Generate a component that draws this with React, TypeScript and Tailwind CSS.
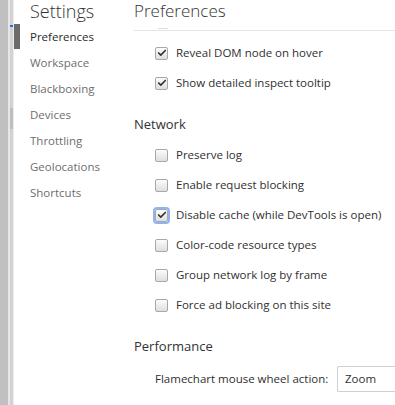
import { Check } from "lucide-react";

const navItems = ["Preferences", "Workspace", "Blackboxing", "Devices", "Throttling", "Geolocations", "Shortcuts"];

const network = [
  { label: "Preserve log", checked: false },
  { label: "Enable request blocking", checked: false },
  { label: "Disable cache (while DevTools is open)", checked: true, focused: true },
  { label: "Color-code resource types", checked: false },
  { label: "Group network log by frame", checked: false },
  { label: "Force ad blocking on this site", checked: false },
];

function Box({ checked, focused }: { checked: boolean; focused?: boolean }) {
  return (
    <span
      className={
        "flex size-[13px] shrink-0 items-center justify-center rounded-[2px] border border-[#a8a8a8] bg-gradient-to-b from-[#fcfcfc] to-[#dedede] " +
        (focused ? "outline outline-2 outline-[#8fb4f0]" : "")
      }
    >
      {checked && <Check size={10} strokeWidth={4} className="text-[#333]" />}
    </span>
  );
}

function Row({ label, checked, focused }: { label: string; checked: boolean; focused?: boolean }) {
  return (
    <div className="flex h-[30px] items-center gap-[8px] pl-[21px]">
      <Box checked={checked} focused={focused} />
      <span className="whitespace-nowrap text-[11.5px] text-[#303030]">{label}</span>
    </div>
  );
}

export default function App() {
  return (
    <div
      className="flex h-[405px] w-[395px] overflow-hidden bg-white"
      style={{ fontFamily: '"Segoe UI", "Open Sans", sans-serif' }}
    >
      {/* left gutter */}
      <div className="w-[8px] bg-[#c0c0c0]" />
      <div className="w-[2px] bg-[#e6e6e6]" />
      <div className="relative w-[3px] bg-[#d2d2d2]">
        <div className="absolute left-0 top-[25px] h-[2px] w-[3px] bg-[#1a73e8]" />
        <div className="absolute left-0 top-[108px] h-[21px] w-[3px] bg-[#bdbdbd]" />
      </div>
      <div className="w-[1px] bg-[#ececec]" />

      {/* sidebar */}
      <aside className="w-[120px] shrink-0">
        <h1 className="h-[23px] pl-[16px] pt-[1px] text-[18px] font-light leading-[21px] text-[#333]">Settings</h1>
        <nav>
          {navItems.map((item, i) => (
            <div key={item} className="flex h-[26px] items-center pt-[1px]">
              <span className={"h-full w-[6px] " + (i === 0 ? "bg-[#6b6b6b]" : "")} />
              <span className={"pl-[10px] text-[11.5px] " + (i === 0 ? "text-[#2a2a2a]" : "text-[#6e6e6e]")}>{item}</span>
            </div>
          ))}
        </nav>
      </aside>

      {/* content */}
      <main className="flex-1">
        <h2 className="h-[22px] pt-[1px] text-[17px] font-light leading-[20px] text-[#333]">Preferences</h2>
        <div className="relative h-[9px] border-b border-[#e4e4e4]">
          <span className="absolute bottom-[1px] left-[24px] h-[1px] w-[10px] bg-[#dcdcdc]" />
        </div>
        <div className="pt-[7px]">
          <Row label="Reveal DOM node on hover" checked />
          <Row label="Show detailed inspect tooltip" checked />
        </div>

        <h3 className="mt-[16px] h-[20px] text-[13px] leading-[20px] text-[#333]">Network</h3>
        <div className="pt-[6px]">
          {network.map((r) => (
            <Row key={r.label} {...r} />
          ))}
        </div>

        <h3 className="mt-[16px] h-[20px] text-[13px] leading-[20px] text-[#333]">Performance</h3>
        <div className="mt-[10px] flex items-center pl-[21px]">
          <span className="w-[182px] whitespace-nowrap text-[11.5px] text-[#303030]">Flamechart mouse wheel action:</span>
          <div className="flex h-[26px] flex-1 items-center rounded-l-[2px] border border-r-0 border-[#d0d0d0] pl-[7px] text-[11.5px] text-[#303030]">
            Zoom
          </div>
        </div>
      </main>
    </div>
  );
}
